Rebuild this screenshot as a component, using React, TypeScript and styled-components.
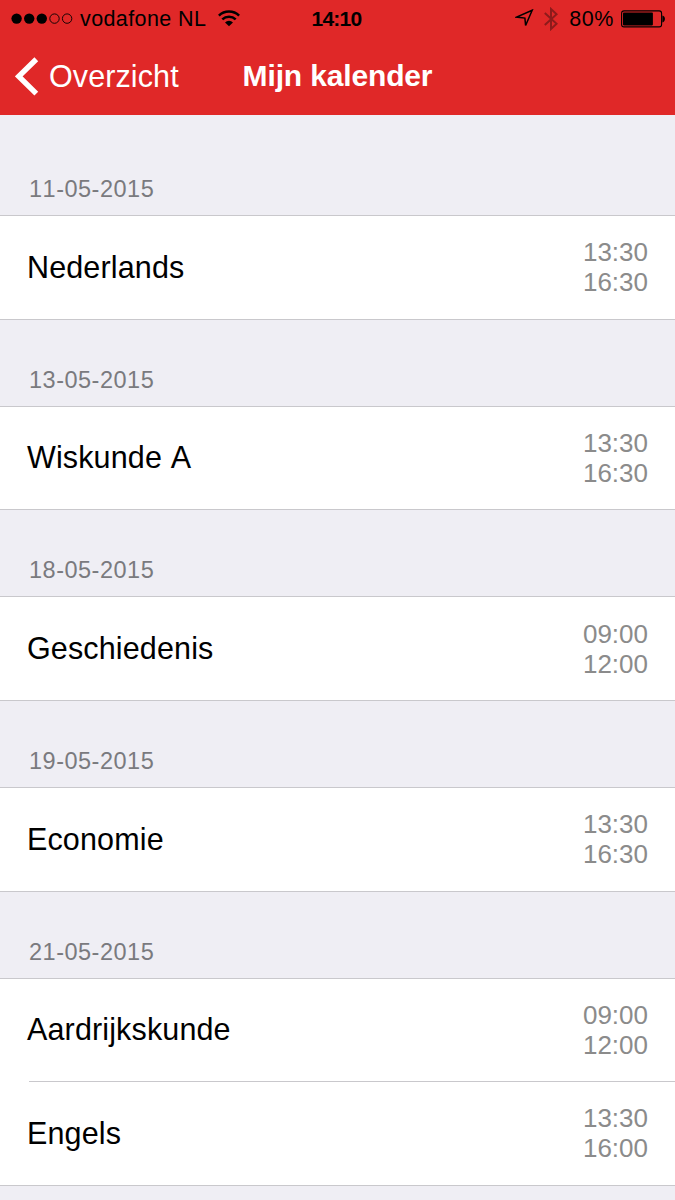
import React from 'react';
import styled, { createGlobalStyle } from 'styled-components';

const GlobalStyle = createGlobalStyle`
  html, body { margin: 0; padding: 0; background: #efeef4; }
  body {
    font-family: "Liberation Sans", Arial, sans-serif;
    font-kerning: none;
    overflow: hidden;
  }
`;

const Screen = styled.div`
  width: 675px;
  height: 1200px;
  overflow: hidden;
  background: #efeef4;
`;

const Header = styled.header`
  box-sizing: border-box;
  height: 115px;
  background: #e02828;
`;

const StatusBar = styled.div`
  display: grid;
  grid-template-columns: 1fr auto 1fr;
  align-items: center;
  height: 37px;
  padding: 0 10px 0 11px;
  color: #000;
  font-size: 21px;
  line-height: 37px;
`;

const StatusGroup = styled.div<{ $end?: boolean }>`
  display: flex;
  align-items: center;
  height: 37px;
  justify-content: ${(p) => (p.$end ? 'flex-end' : 'flex-start')};
`;

const Carrier = styled.span`
  margin: 0 12px 0 7px;
  padding-top: 1px;
  font-size: 21.5px;
  letter-spacing: 0.4px;
`;

const Clock = styled.span`
  margin-right: 3px;
  font-size: 21px;
  font-weight: 700;
  letter-spacing: -0.75px;
`;

const Percent = styled.span`
  margin: 0 7px 0 10px;
  padding-top: 1px;
  font-size: 21.5px;
  letter-spacing: 0.6px;
`;

const NavBar = styled.nav`
  display: grid;
  grid-template-columns: 1fr auto 1fr;
  align-items: center;
  height: 78px;
  padding: 0 15px;
  color: #fff;
`;

const BackButton = styled.button`
  display: flex;
  align-items: center;
  gap: 10px;
  padding: 0;
  border: 0;
  background: none;
  color: inherit;
  font: 30.5px/36px "Liberation Sans", Arial, sans-serif;
  letter-spacing: 0.1px;
`;

const Title = styled.h1`
  margin: 0;
  font-size: 30px;
  line-height: 36px;
  font-weight: 700;
  letter-spacing: -0.15px;
`;

const SectionHeader = styled.h2<{ $first?: boolean }>`
  box-sizing: border-box;
  display: flex;
  align-items: flex-end;
  height: ${(p) => (p.$first ? 100.2 : 86)}px;
  margin: 0;
  padding: 0 29px 12px;
  color: #7a7a7e;
  font-size: 23.5px;
  font-weight: 400;
  line-height: 28px;
  letter-spacing: 0.5px;
`;

const List = styled.ul`
  margin: 0;
  padding: 0;
  list-style: none;
  background: #fff;
  border-top: 1px solid #c9c8cc;
  border-bottom: 1px solid #c9c8cc;
`;

const Row = styled.li`
  box-sizing: border-box;
  display: flex;
  align-items: center;
  justify-content: space-between;
  height: 102.6px;
  padding: 0 27px;
`;

const Divider = styled.li`
  height: 1px;
  margin-left: 29px;
  background: #c9c8cc;
`;

const Subject = styled.span`
  padding-bottom: 1.3px;
  color: #000;
  font-size: 30.5px;
  line-height: 36px;
  letter-spacing: 0.14px;
`;

const Times = styled.div`
  display: flex;
  flex-direction: column;
  align-items: flex-end;
  padding-bottom: 0.3px;
  color: #8b8b8b;
  font-size: 26px;
  line-height: 30px;
`;

const SignalDots = () => (
  <svg width="62" height="12" viewBox="0 0 62 12">
    {[5.6, 18.2, 30.8].map((x) => <circle key={x} cx={x} cy="5.6" r="5.2" />)}
    {[43.5, 56.1].map((x) => (
      <circle key={x} cx={x} cy="5.6" r="4.7" fill="none" stroke="#000" strokeWidth="0.9" />
    ))}
  </svg>
);

const Wifi = () => (
  <svg width="22" height="17" viewBox="0 0 22 17" fill="none" stroke="#000" strokeWidth="2.5">
    <path d="M0.9 5.6a14.5 14.5 0 0 1 20.2 0" />
    <path d="M4.3 9.4a9.7 9.7 0 0 1 13.4 0" />
    <path d="M7 12.4a5.8 5.8 0 0 1 8 0L11 16.3z" fill="#000" stroke="none" />
  </svg>
);

const LocationArrow = () => (
  <svg width="19" height="19" viewBox="0 0 19 19" fill="none" stroke="#000" strokeWidth="1.5">
    <path d="M17.2 1.2 1.6 8.1l8.3 1 .7 7.4z" />
  </svg>
);

const Bluetooth = () => (
  <svg width="14" height="24" viewBox="0 0 14 24" fill="none" stroke="#8d1b1b" strokeWidth="2">
    <path d="M0.8 6 12.6 16.8 7 22V2l5.6 5.2L0.8 18" />
  </svg>
);

const StatusIcons = styled.span`
  display: flex;
  align-items: center;
  gap: 10px;
  margin-right: 1px;
`;

const Battery = () => (
  <svg width="44" height="18" viewBox="0 0 44 18">
    <rect x="0.6" y="0.9" width="40" height="16" rx="2.4" fill="none" stroke="#000" strokeWidth="1.1" />
    <rect x="2" y="2.6" width="29.9" height="12.8" rx="0.8" />
    <path d="M41.4 5.6c3.4.9 3.4 6 0 6.8z" />
  </svg>
);

const BackChevron = () => (
  <svg width="24" height="39" viewBox="0 0 24 39" fill="none" stroke="#fff" strokeWidth="5.4">
    <path d="M21.3 2.2 3.8 19.4l17.5 17.2" />
  </svg>
);

interface Exam {
  subject: string;
  start: string;
  end: string;
}

const days: { date: string; exams: Exam[] }[] = [
  { date: '11-05-2015', exams: [{ subject: 'Nederlands', start: '13:30', end: '16:30' }] },
  { date: '13-05-2015', exams: [{ subject: 'Wiskunde A', start: '13:30', end: '16:30' }] },
  { date: '18-05-2015', exams: [{ subject: 'Geschiedenis', start: '09:00', end: '12:00' }] },
  { date: '19-05-2015', exams: [{ subject: 'Economie', start: '13:30', end: '16:30' }] },
  {
    date: '21-05-2015',
    exams: [
      { subject: 'Aardrijkskunde', start: '09:00', end: '12:00' },
      { subject: 'Engels', start: '13:30', end: '16:00' },
    ],
  },
];

export default function App() {
  return (
    <Screen>
      <GlobalStyle />
      <Header>
        <StatusBar>
          <StatusGroup>
            <SignalDots />
            <Carrier>vodafone NL</Carrier>
            <Wifi />
          </StatusGroup>
          <Clock>14:10</Clock>
          <StatusGroup $end>
            <StatusIcons>
              <LocationArrow />
              <Bluetooth />
            </StatusIcons>
            <Percent>80%</Percent>
            <Battery />
          </StatusGroup>
        </StatusBar>
        <NavBar>
          <BackButton>
            <BackChevron />
            Overzicht
          </BackButton>
          <Title>Mijn kalender</Title>
        </NavBar>
      </Header>
      {days.map((day, i) => (
        <section key={day.date}>
          <SectionHeader $first={i === 0}>{day.date}</SectionHeader>
          <List>
            {day.exams.map((exam, j) => (
              <React.Fragment key={exam.subject}>
                {j > 0 && <Divider />}
                <Row>
                  <Subject>{exam.subject}</Subject>
                  <Times>
                    <span>{exam.start}</span>
                    <span>{exam.end}</span>
                  </Times>
                </Row>
              </React.Fragment>
            ))}
          </List>
        </section>
      ))}
    </Screen>
  );
}
